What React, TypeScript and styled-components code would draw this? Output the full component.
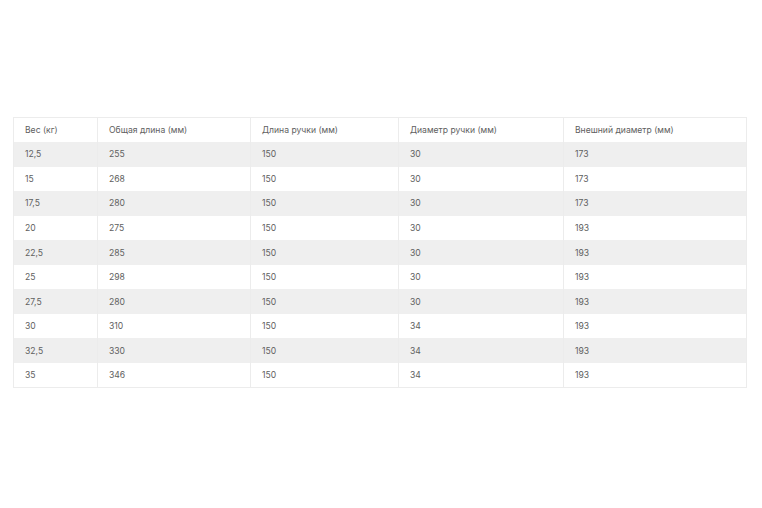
import React from "react";
import styled, { createGlobalStyle } from "styled-components";

const Global = createGlobalStyle`
  html, body { margin: 0; padding: 0; background: #fff; }
  body { font-family: Inter, "Noto Sans", "Liberation Sans", sans-serif; }
`;

const Page = styled.div`
  width: 762px;
  height: 508px;
  padding: 117px 16px 0 13px;
  box-sizing: border-box;
`;

const Table = styled.table`
  width: 733px;
  border-collapse: collapse;
  table-layout: fixed;
  border: 1px solid #ececec;
`;

const Row = styled.tr<{ $striped?: boolean }>`
  height: 24.55px;
  background: ${(p) => (p.$striped ? "#efefef" : "#fff")};
`;

const Cell = styled.td`
  padding: 0 0 0 11px;
  border-left: 1px solid #ececec;
  border-right: 1px solid #ececec;
  font-size: 8.6px;
  color: #606060;
  text-align: left;
  vertical-align: middle;
  white-space: nowrap;
`;

const Head = styled(Cell).attrs({ as: "th" })`
  font-weight: 400;
`;

const widths = [84, 153, 148, 165, 183];
const headers = ["Вес (кг)", "Общая длина (мм)", "Длина ручки (мм)", "Диаметр ручки (мм)", "Внешний диаметр (мм)"];
const rows = [
  ["12,5", "255", "150", "30", "173"],
  ["15", "268", "150", "30", "173"],
  ["17,5", "280", "150", "30", "173"],
  ["20", "275", "150", "30", "193"],
  ["22,5", "285", "150", "30", "193"],
  ["25", "298", "150", "30", "193"],
  ["27,5", "280", "150", "30", "193"],
  ["30", "310", "150", "34", "193"],
  ["32,5", "330", "150", "34", "193"],
  ["35", "346", "150", "34", "193"],
];

export default function App() {
  return (
    <Page>
      <Global />
      <Table>
        <colgroup>
          {widths.map((w, i) => (
            <col key={i} style={{ width: w }} />
          ))}
        </colgroup>
        <thead>
          <Row>
            {headers.map((h) => (
              <Head key={h}>{h}</Head>
            ))}
          </Row>
        </thead>
        <tbody>
          {rows.map((r, i) => (
            <Row key={i} $striped={i % 2 === 0}>
              {r.map((c, j) => (
                <Cell key={j}>{c}</Cell>
              ))}
            </Row>
          ))}
        </tbody>
      </Table>
    </Page>
  );
}
